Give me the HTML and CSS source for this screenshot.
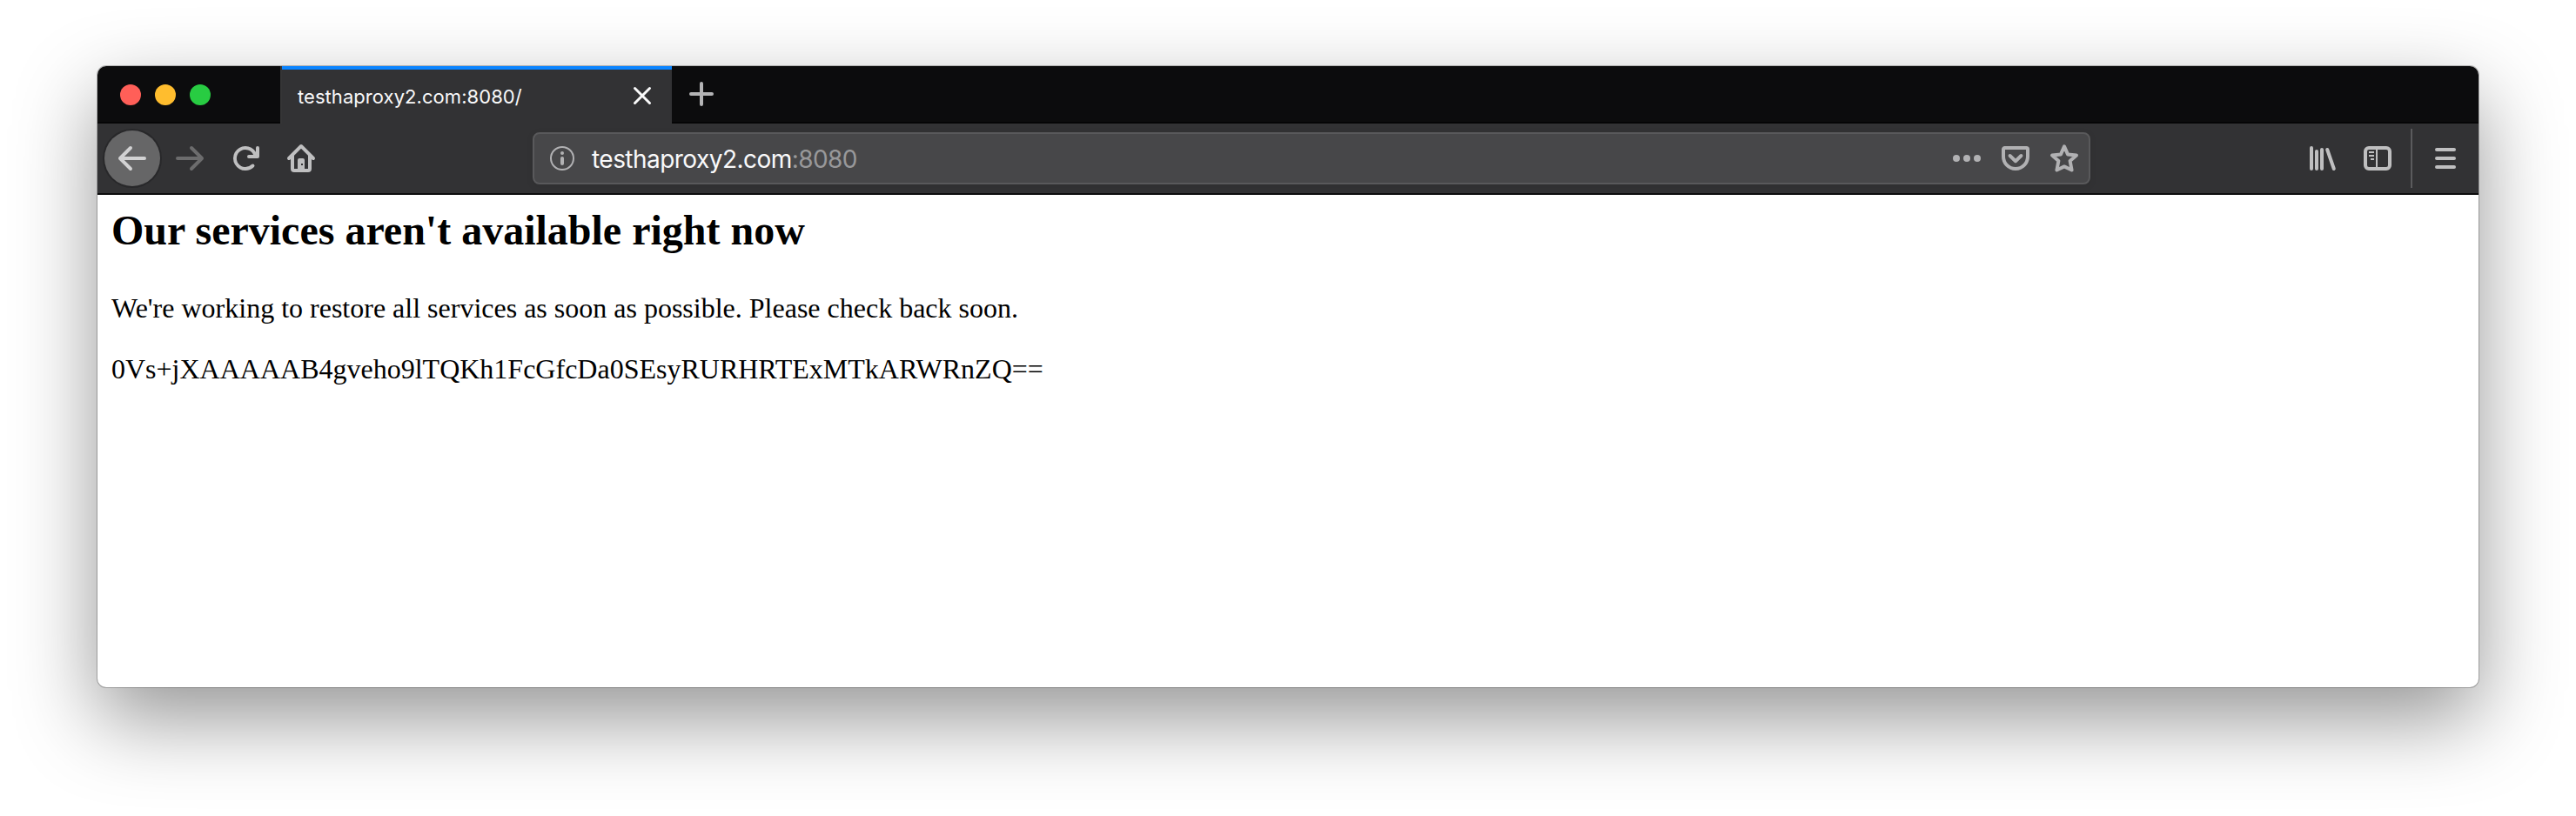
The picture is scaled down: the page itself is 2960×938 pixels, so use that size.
FILE: index.html
```html
<!DOCTYPE html>
<html lang="en">
<head>
<meta charset="utf-8">
<title>testhaproxy2.com:8080/</title>
<link rel="stylesheet" href="styles.css">
</head>
<body>
<div class="window">
  <div class="tabbar">
    <div class="lights"><span class="light red"></span><span class="light yellow"></span><span class="light green"></span></div>
    <div class="tab">
      <span class="tab-title">testhaproxy2.com:8080/</span>
      <svg class="close" viewBox="0 0 20 20"><path d="M1.5 1.5l17 17M18.500 1.500l-17 17"/></svg>
    </div>
    <svg class="newtab" viewBox="0 0 28 28"><path d="M14 2v24M2 14h24"/></svg>
  </div>
  <div class="toolbar">
    <div class="back"><svg class="icon" viewBox="0 0 16 16"><path d="M15 7H3.414l4.293-4.293a1 1 0 0 0-1.414-1.414l-6 6a1 1 0 0 0 0 1.414l6 6a1 1 0 0 0 1.414-1.414L3.414 9H15a1 1 0 0 0 0-2z"/></svg></div>
    <svg class="icon forward" viewBox="0 0 16 16"><path d="M1 7h11.586L8.293 2.707a1 1 0 0 1 1.414-1.414l6 6a1 1 0 0 1 0 1.414l-6 6a1 1 0 0 1-1.414-1.414L12.586 9H1a1 1 0 0 1 0-2z"/></svg>
    <svg class="icon reload" viewBox="0 0 16 16"><path d="M15 1a1 1 0 0 0-1 1v2.418A6.995 6.995 0 1 0 8 15a6.954 6.954 0 0 0 4.950-2.050 1 1 0 0 0-1.414-1.414A5.019 5.019 0 1 1 12.549 6H10a1 1 0 0 0 0 2h5a1 1 0 0 0 1-1V2a1 1 0 0 0-1-1z"/></svg>
    <svg class="icon home" viewBox="0 0 16 16"><path fill-rule="evenodd" d="M15.707 7.293l-7-7a1 1 0 0 0-1.414 0l-7 7a1 1 0 0 0 1.414 1.414L2 8.414V14a2 2 0 0 0 2 2h8a2 2 0 0 0 2-2V8.414l.293.293a1 1 0 0 0 1.414-1.414zM12 14h-2V9a1 1 0 0 0-1-1H7a1 1 0 0 0-1 1v5H4V6.414l4-4 4 4zM8 11h1v1H8z"/></svg>
    <div class="urlbar">
      <svg class="icon" viewBox="0 0 16 16"><circle cx="8" cy="8" r="6.500" fill="none" stroke="currentColor"/><circle cx="8" cy="5" r="1"/><rect x="7" y="7" width="2" height="5" rx="1"/></svg>
      <span class="url">testhaproxy2.com<span class="port">:8080</span></span>
      <svg class="icon" viewBox="0 0 16 16"><circle cx="2" cy="8" r="2"/><circle cx="8" cy="8" r="2"/><circle cx="14" cy="8" r="2"/></svg>
      <svg class="icon pocket" viewBox="0 0 16 16"><path class="line" d="M1.800 2h12.400a.8.8 0 0 1 .8.8V7a7 7 0 0 1-14 0V2.800A.8.8 0 0 1 1.800 2zM4.800 6.500L8 9.600l3.200-3.100"/></svg>
      <svg class="icon star" viewBox="0 0 16 16"><path class="line" d="M8 1.150L10 5.700l5 .55-3.700 3.200 1 5.300L8 12.700l-4.300 2.050 1-5.300L1 6.250l5-.55z"/></svg>
    </div>
    <svg class="icon library" viewBox="0 0 16 16"><path class="line" d="M2 2v12M5 4v10M8 3v11M11.100 3l3.800 11"/></svg>
    <svg class="icon sidebar" viewBox="0 0 16 16"><path class="line" d="M3 2h10a2 2 0 0 1 2 2v8a2 2 0 0 1-2 2H3a2 2 0 0 1-2-2V4a2 2 0 0 1 2-2z"/><path class="thin" d="M7.500 2v12M3 4.500h3M3 6.500h3M4 8.500h2"/></svg>
    <span class="divider"></span>
    <svg class="menu" viewBox="0 0 24 24"><path d="M2 2h20M2 12h20M2 22h20"/></svg>
  </div>
  <main class="page">
    <h2>Our services aren't available right now</h2>
    <p>We're working to restore all services as soon as possible. Please check back soon.</p>
    <p>0Vs+jXAAAAAB4gveho9lTQKh1FcGfcDa0SEsyRURHRTExMTkARWRnZQ==</p>
  </main>
</div>
</body>
</html>
```
FILE: styles.css
```css
* { box-sizing: border-box; }
body {
  margin: 0;
  padding: 76px 112px 148px;
  height: 938px;
  overflow: hidden;
  background: #fff;
}
svg { display: block; flex: none; overflow: visible; }
.window {
  height: 714px;
  display: flex;
  flex-direction: column;
  overflow: hidden;
  border-radius: 10px;
  background: #fff;
  box-shadow: 0 0 0 1px rgba(0, 0, 0, .24), 0 36px 94px rgba(0, 0, 0, .42);
  font-family: Inter, "Liberation Sans", sans-serif;
}
.tabbar {
  height: 66px;
  flex: none;
  display: flex;
  background: linear-gradient(#0c0c0d 64px, #050506 64px);
}
.lights {
  width: 212px;
  padding: 21px 0 0 26px;
  display: flex;
  gap: 16px;
  border-right: 2px solid #353536;
}
.light { width: 24px; height: 24px; border-radius: 50%; }
.red { background: #ff5f58; }
.yellow { background: #ffbd2e; }
.green { background: #28cc42; }
.tab {
  width: 448px;
  padding: 0 24px 0 18px;
  display: flex;
  align-items: center;
  justify-content: space-between;
  background: #323234;
  border-top: 4px solid #0a84ff;
  color: #f9f9fa;
}
.tab-title { font-size: 22px; letter-spacing: .06px; }
.close { width: 20px; height: 20px; margin-top: -2px; fill: none; stroke: #f9f9fa; stroke-width: 3; stroke-linecap: round; }
.newtab { width: 28px; height: 28px; margin: 18px 0 0 20px; fill: none; stroke: #b4b4b5; stroke-width: 4; stroke-linecap: round; }
.toolbar {
  height: 82px;
  flex: none;
  display: flex;
  align-items: center;
  padding: 0 26px 0 8px;
  background: #323234;
  border-bottom: 2px solid #0c0c0d;
  color: #bfbfc0;
}
.icon { width: 32px; height: 32px; fill: currentColor; }
.line, .thin { fill: none; stroke: currentColor; stroke-width: 2; stroke-linecap: round; stroke-linejoin: round; }
.thin { stroke-width: 1; stroke-linecap: butt; }
.back {
  width: 64px;
  height: 64px;
  display: grid;
  place-items: center;
  border-radius: 50%;
  background: #666667;
  box-shadow: 0 0 0 2px #28282a;
  color: #d2d2d3;
}
.forward { margin-left: 18px; color: #6c6c6d; }
.reload { margin-left: 32px; }
.home { margin-left: 32px; }
.urlbar {
  width: 1790px;
  height: 60px;
  margin-left: 250px;
  padding: 0 12px 0 16px;
  display: flex;
  align-items: center;
  border: 2px solid #59595b;
  border-radius: 8px;
  background: #474749;
  box-shadow: 0 2px 8px rgba(0, 0, 0, .08);
  color: #b1b1b3;
}
.url { flex: 1; margin-left: 18px; padding-top: 2px; font-size: 28px; letter-spacing: -.54px; color: #f9f9fa; }
.port { color: #98989a; }
.pocket { margin-left: 24px; }
.star { margin-left: 24px; }
.library { margin-left: 250px; }
.sidebar { margin-left: 32px; }
.divider { width: 2px; height: 68px; margin-left: 22px; background: #5b5b5d; }
.menu { width: 24px; height: 24px; margin-left: 26px; fill: none; stroke: currentColor; stroke-width: 4; stroke-linecap: round; }
.page {
  padding: 13px 16px;
  font-family: "Liberation Serif", serif;
  font-size: 32px;
  line-height: 37px;
  color: #000;
}
h2 { margin: 0; font-size: 48px; line-height: 55px; }
p { margin: 0; }
h2 + p { margin-top: 44px; }
p + p { margin-top: 33px; }
```
